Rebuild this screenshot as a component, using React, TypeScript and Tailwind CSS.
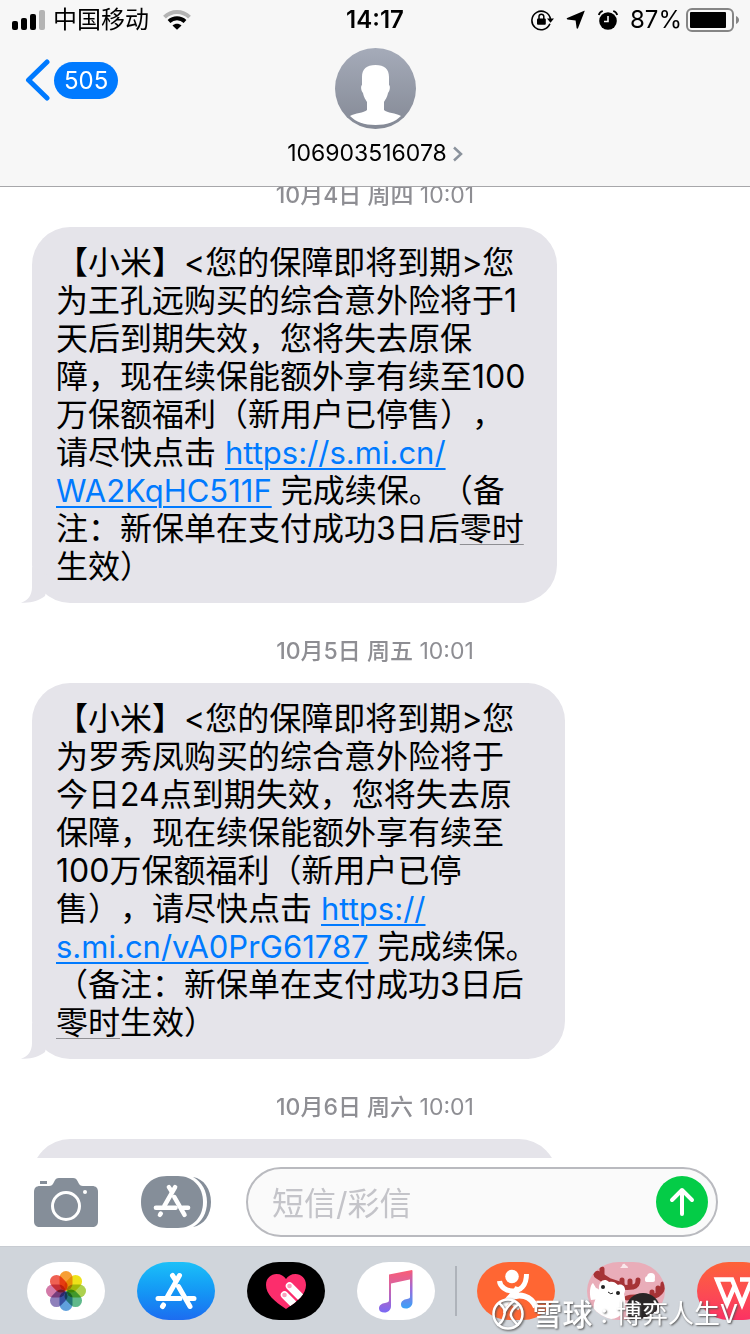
import React, { useState } from 'react';

type Message = {
  day: string;
  time: string;
  width: string;
  body?: React.ReactNode;
};

function BodyLink({ href, children }: { href: string; children: React.ReactNode }) {
  return (
    <a href={href} className="text-[31px] text-[#007aff] underline decoration-2 underline-offset-4">
      {children}
    </a>
  );
}

function DateHint({ children }: { children: React.ReactNode }) {
  return (
    <span className="underline decoration-[#8e8e93] decoration-1 underline-offset-4">{children}</span>
  );
}

const messages: Message[] = [
  {
    day: '10月4日 周四',
    time: '10:01',
    width: 'w-[70%]',
    body: (
      <>
        【小米】&lt;您的保障即将到期&gt;您<br />
        为王孔远购买的综合意外险将于1<br />
        天后到期失效，您将失去原保<br />
        障，现在续保能额外享有续至100<br />
        万保额福利（新用户已停售），<br />
        请尽快点击 <BodyLink href="https://s.mi.cn/WA2KqHC511F">https://s.mi.cn/<br />
        WA2KqHC511F</BodyLink> 完成续保。（备<br />
        注：新保单在支付成功3日后<DateHint>零时</DateHint><br />
        生效）
      </>
    ),
  },
  {
    day: '10月5日 周五',
    time: '10:01',
    width: 'w-[71%]',
    body: (
      <>
        【小米】&lt;您的保障即将到期&gt;您<br />
        为罗秀凤购买的综合意外险将于<br />
        今日24点到期失效，您将失去原<br />
        保障，现在续保能额外享有续至<br />
        100万保额福利（新用户已停<br />
        售），请尽快点击 <BodyLink href="https://s.mi.cn/vA0PrG61787">https://<br />
        s.mi.cn/vA0PrG61787</BodyLink> 完成续保。<br />
        （备注：新保单在支付成功3日后<br />
        <DateHint>零时</DateHint>生效）
      </>
    ),
  },
  {
    day: '10月6日 周六',
    time: '10:01',
    width: 'w-[70%]',
  },
];

function StatusBar() {
  return (
    <div className="grid h-10 grid-cols-[1fr_auto_1fr] items-center px-3 text-2xl leading-none">
      <div className="flex items-center">
        <svg width="33" height="20" viewBox="0 0 33 20" aria-hidden="true">
          <rect x="0" y="11" width="6" height="9" rx="2" />
          <rect x="9" y="8" width="6" height="12" rx="2" />
          <rect x="18" y="4" width="6" height="16" rx="2" />
          <rect x="27" y="0" width="6" height="20" rx="2" fill="#b4b4b4" />
        </svg>
        <span className="ml-2">中国移动</span>
        <svg className="ml-3.5" width="28" height="20" viewBox="0 0 28 20" fill="none" aria-hidden="true">
          <path d="M1.5 7.2C8.5 .3 19.5 .3 26.5 7.2" stroke="#b4b4b4" strokeWidth="4" />
          <path d="M6 11.5c4.600-4.300 11.400-4.300 16 0" stroke="#000" strokeWidth="4" />
          <path d="M9.500 15.400c2.600-2.300 6.400-2.300 9 0L14 19.800z" fill="#000" />
        </svg>
      </div>
      <span className="font-semibold">14:17</span>
      <div className="flex items-center justify-end">
        <svg width="23" height="22" viewBox="0 0 23 22" fill="none" aria-hidden="true">
          <path d="M18.900 14.800A9.300 9.300 0 1 1 19.400 10" stroke="#000" strokeWidth="1.6" />
          <path d="M16 9.500h7l-3.500 4.300z" fill="#000" />
          <path d="M8 10V7.600a2.400 2.400 0 0 1 4.800 0V10" stroke="#000" strokeWidth="1.5" />
          <rect x="6" y="9.5" width="8.8" height="6.3" rx="1" fill="#000" />
        </svg>
        <svg className="ml-3" width="20" height="20" viewBox="0 0 20 20" aria-hidden="true">
          <path d="M18.600 1.200 12 18.300c-.3.700-1.300.600-1.400-.200L9.600 10.600 1.400 9.400C.6 9.200.500 8.400 1.200 8.100L17.700 1c.6-.2 1.100-.4.900.2z" />
        </svg>
        <svg className="ml-3" width="20" height="20" viewBox="0 0 20 20" fill="none" aria-hidden="true">
          <circle cx="10" cy="11" r="8.8" fill="#000" />
          <path d="M10 6v5.500H6" stroke="#f7f7f7" strokeWidth="1.6" />
          <path d="M.8 5C1.300 3 2.800 1.500 4.800 1M19.200 5C18.700 3 17.200 1.500 15.200 1" stroke="#000" strokeWidth="1.8" />
        </svg>
        <span className="ml-3">87%</span>
        <svg className="-mr-0.5 ml-1" width="54" height="24" viewBox="0 0 54 24" aria-hidden="true">
          <rect x="1" y="1" width="46" height="22" rx="5" fill="none" stroke="#858585" strokeWidth="2" />
          <rect x="4" y="4" width="36" height="16" rx="1" />
          <path d="M50 8c4 1.500 4 6.500 0 8z" fill="#858585" />
        </svg>
      </div>
    </div>
  );
}

function Header() {
  return (
    <header className="border-b border-[#a7a7aa] bg-[#f7f7f7]">
      <StatusBar />
      <div className="grid grid-cols-3 items-start px-6 pt-2 pb-4">
        <a href="#inbox" aria-label="505" className="mt-[11px] flex items-center gap-1">
          <svg width="26" height="42" viewBox="0 0 26 42" fill="none" stroke="#007aff" strokeWidth="5" strokeLinecap="round" strokeLinejoin="round" aria-hidden="true">
            <path d="M23 3 4.500 21 23 39" />
          </svg>
          <span className="rounded-full bg-[#007aff] px-2.5 text-2xl leading-[37px] text-white">505</span>
        </a>
        <div className="flex flex-col items-center">
          <svg width="81" height="81" viewBox="0 0 81 81" aria-hidden="true">
            <defs>
              <linearGradient id="avatar" x1="0" y1="0" x2="0" y2="1">
                <stop offset="0" stopColor="#a5abb9" />
                <stop offset="1" stopColor="#848995" />
              </linearGradient>
            </defs>
            <circle cx="40.5" cy="40.5" r="40.5" fill="url(#avatar)" />
            <path
              d="M40.500 17c9 0 13.500 4 13.500 12v8c1.500.5 1 6-1 8-1 5-3 7-4 9v8c3 3 12 3 17 6-6 6-14 9-25.500 9S21 74 15 68c5-3 14-3 17-6v-8c-1-2-3-4-4-9-2-2-2.500-7.500-1-8v-8c0-8 4.500-12 13.500-12z"
              fill="#fff"
            />
          </svg>
          <button type="button" className="mt-2 flex items-center gap-1.5 text-[23px] leading-[33px]">
            106903516078
            <svg width="10" height="16" viewBox="0 0 10 16" fill="none" stroke="#8a929c" strokeWidth="2.5" aria-hidden="true">
              <path d="M1 1.500 8 8l-7 6.500" />
            </svg>
          </button>
        </div>
      </div>
    </header>
  );
}

function Bubble({ width, children }: { width: string; children?: React.ReactNode }) {
  return (
    <div className={`relative mt-6 ml-8 min-h-20 rounded-[38px] bg-[#e5e4ea] py-[17px] pl-6 text-[32px] leading-[38px] whitespace-nowrap ${width}`}>
      {children}
      <svg className="absolute bottom-0 -left-3" width="40" height="36" viewBox="0 0 40 36" aria-hidden="true">
        <path d="M12 0v20C12 28 8 34 1 35.500c8 1 18-1.500 24-6.500L30 10z" fill="#e5e4ea" />
      </svg>
    </div>
  );
}

function StoreGlyph({ className }: { className?: string }) {
  return (
    <svg className={className} viewBox="0 0 42 38" fill="none" stroke="#fff" strokeWidth="5" strokeLinecap="round" aria-hidden="true">
      <path d="M17.500 3.500 20.500 8" />
      <path d="M24.500 3.500 12.500 24.500" />
      <path d="M23.500 14.500 35 34.500" />
      <path d="M3 26.500H25M33 26.500h6" />
      <path d="M8.500 33 7.500 34.500" />
    </svg>
  );
}

const petals = ['#f7941e', '#ecdf00', '#a4cc3c', '#4fb27e', '#4f96d8', '#8272b4', '#cf6b9f', '#ee5040'];

function Composer() {
  const [text, setText] = useState('');

  return (
    <form className="flex h-22 shrink-0 items-center bg-white pr-8 pl-[34px]" onSubmit={(e) => e.preventDefault()}>
      <button type="button" aria-label="相机">
        <svg width="64" height="49" viewBox="0 0 64 49" fill="#858e99" aria-hidden="true">
          <rect x="6" y="3" width="7" height="3" />
          <path d="M6 8h9c2.500 0 3.500-1 4.500-3l1-2C21.500 1 22.500 0 25 0h14c2.500 0 3.500 1 4.500 3l1 2c1 2 2 3 4.500 3h9c4 0 6 2 6 6v29c0 4-2 6-6 6H6c-4 0-6-2-6-6V14c0-4 2-6 6-6z" />
          <circle cx="32" cy="28" r="13.5" fill="none" stroke="#fff" strokeWidth="3" />
          <circle cx="51" cy="14" r="2" fill="#fff" />
        </svg>
      </button>
      <button type="button" aria-label="App Store" className="relative ml-[43px]">
        <svg width="70" height="52" viewBox="0 0 70 52" fill="#858e99" aria-hidden="true">
          <path d="M26 0h11c15 0 25 11 25 26S52 52 37 52H26C10 52 0 41 0 26S10 0 26 0z" />
          <path d="M52 1c11 2 18 12 18 25s-7 23-18 25c9-5 14-14 14-25S61 6 52 1z" />
        </svg>
        <StoreGlyph className="absolute top-2 left-3 h-[34px] w-[38px]" />
      </button>
      <div className="ml-[35px] flex h-[70px] min-w-0 flex-1 items-center rounded-full border-2 border-[#b9babf] bg-[#fafafa] pr-2 pl-6">
        <input
          aria-label="短信/彩信"
          placeholder="短信/彩信"
          className="min-w-0 flex-1 bg-transparent pt-1 text-[32px] outline-none placeholder:text-[#c4c4c9]"
          value={text}
          onChange={(e) => setText(e.target.value)}
        />
        <button type="submit" aria-label="发送" className="flex size-[52px] items-center justify-center rounded-full bg-[#04cc47]">
          <svg width="26" height="30" viewBox="0 0 26 30" fill="none" stroke="#fff" strokeWidth="4" strokeLinecap="round" strokeLinejoin="round" aria-hidden="true">
            <path d="M13 27V3M3 13 13 3l10 10" />
          </svg>
        </button>
      </div>
    </form>
  );
}

const appShape = 'flex h-[58px] w-[78px] shrink-0 items-center justify-center overflow-hidden rounded-[32px/29px]';

function AppStrip() {
  return (
    <nav className="flex h-22 shrink-0 items-center overflow-hidden border-t border-[#c8ccd2] bg-[#d0d5db] pl-[27px]">
      <button type="button" aria-label="照片" className={`${appShape} bg-white`}>
        <svg width="42" height="42" viewBox="0 0 42 42" aria-hidden="true">
          {petals.map((color, i) => (
            <rect key={color} x="14.5" y="1" width="13" height="19.5" rx="6.5" fill={color} className="mix-blend-multiply" opacity="0.9" transform={`rotate(${i * 45} 21 21)`} />
          ))}
        </svg>
      </button>
      <button type="button" aria-label="App Store" className={`${appShape} ml-8 bg-linear-to-b from-[#1dc0f8] to-[#1d6cf0]`}>
        <StoreGlyph className="h-[38px] w-[42px]" />
      </button>
      <button type="button" aria-label="Digital Touch" className={`${appShape} ml-8 bg-black`}>
        <svg width="42" height="38" viewBox="0 0 42 38" aria-hidden="true">
          <defs>
            <clipPath id="heart">
              <path d="M21 37C9 29 1 22 1 13 1 6 6 2 11.500 2 16 2 19 4 21 7c2-3 5-5 9.500-5C36 2 41 6 41 13c0 9-8 16-20 24z" />
            </clipPath>
          </defs>
          <g clipPath="url(#heart)">
            <path d="M0 0h42v38H0z" fill="#fc2d6c" />
            <path d="m24.500 14 17 17M19.500 23l17 17" stroke="#fff" strokeWidth="7.5" strokeLinecap="round" />
            <circle cx="24.5" cy="14" r="2.3" fill="#fba0bd" />
            <circle cx="19.5" cy="23" r="2.3" fill="#fba0bd" />
          </g>
        </svg>
      </button>
      <button type="button" aria-label="音乐" className={`${appShape} ml-8 bg-white`}>
        <svg width="36" height="44" viewBox="0 0 36 44" aria-hidden="true">
          <defs>
            <linearGradient id="note" x1="0" y1="0" x2="0" y2="1">
              <stop offset="0" stopColor="#fb5c74" />
              <stop offset=".35" stopColor="#d963a0" />
              <stop offset="1" stopColor="#7a69f5" />
            </linearGradient>
            <linearGradient id="noteRight" x1="0" y1="0" x2="0" y2="1">
              <stop offset="0" stopColor="#f4597c" />
              <stop offset=".5" stopColor="#9a6cdc" />
              <stop offset="1" stopColor="#38a3f8" />
            </linearGradient>
          </defs>
          <path d="M11 5.500 34 1v9L13 14.500V37c0 4-3 6.500-6.500 6.500S1 42 1 39.500C1 36 4 34.500 7 34c3-.5 4-1 4-3z" fill="url(#note)" />
          <path d="M32 5l2.500-4v32c0 4-3 6.500-6.500 6.500S23 38 23 35.500c0-3.500 3-5 6-5.500s3-1 3-3z" fill="url(#noteRight)" />
        </svg>
      </button>
      <div className="ml-5 h-[50px] w-0.5 shrink-0 bg-[#aeb3ba]" />
      <button type="button" aria-label="健康运动" className={`${appShape} ml-5 bg-[#ff6633]`}>
        <svg width="78" height="58" viewBox="0 0 78 58" fill="none" stroke="#fff" strokeWidth="6" aria-hidden="true">
          <circle cx="35" cy="14.5" r="6.8" fill="#fff" stroke="none" />
          <path d="M22.500 19c1 12 27 17 27-7" strokeWidth="5" />
          <path d="M41 25c-2 8-11 10-15 21M32 37c10-7 22-3 27 8M31 36l12 10" />
        </svg>
      </button>
      <button type="button" aria-label="小鹿贴纸" className={`${appShape} ml-8 bg-[#e9adb9]`}>
        <svg width="78" height="58" viewBox="0 0 78 58" aria-hidden="true">
          <g fill="none" stroke="#a63336" strokeWidth="5" strokeLinecap="round" strokeLinejoin="round">
            <path d="M9 12 22 20c8 5 17 6 24 5 4-1 5-3 5-7M15 13V7M35 22v-4M43 24v-5" />
            <path d="M40 36c9-3 19 2 28-2 5-2 8-6 8-12M65 34v-4M71 31v-5" />
            <path d="M11 13 22 20l12 4" strokeWidth="8" />
          </g>
          <path d="M4 38c-2-7-1-15 2-17l3 5c4 1 6 5 4 11z" fill="#fff" />
          <path d="M12 28c-1-8 5-13 10-8 4-1 6 0 9 3 5-2 9 3 6 9 3 10 1 24-13 25C10 61 5 52 7 41z" fill="#fff" />
          <ellipse cx="56" cy="47" rx="17" ry="16" fill="#292526" />
          <g fill="#222"><circle cx="16" cy="25" r="2" /><circle cx="31" cy="31" r="2" /></g>
          <path d="M21 30q3 3 5 1" fill="none" stroke="#222" />
          <g fill="#fff"><circle cx="61" cy="17" r="3" /><circle cx="64" cy="15" r="4" /><rect x="58" y="16" width="10" height="4" rx="2" /></g>
          <path d="M33 6h8c0-3-3-2-3-4-2-1-3 1-3 2z" fill="#fff" opacity=".7" />
        </svg>
      </button>
      <button type="button" aria-label="WPS" className={`${appShape} ml-8 bg-linear-to-b from-[#fd6237] to-[#fb3163]`}>
        <svg width="78" height="58" viewBox="0 0 78 58" fill="none" stroke="#fff" strokeWidth="4.5" aria-hidden="true">
          <path d="M38 23 30 42 20 17.500h15L45 42l10-24.500h-12" />
        </svg>
      </button>
    </nav>
  );
}

function Watermark() {
  return (
    <div className="pointer-events-none absolute right-3 bottom-0 flex items-center leading-10 text-white [text-shadow:1px_1px_2px_#555]">
      <svg className="mr-2 drop-shadow-[1px_1px_1px_#555]" width="34" height="34" viewBox="0 0 34 34" fill="none" stroke="#fff" strokeWidth="2.5" aria-hidden="true">
        <circle cx="17" cy="17" r="14.5" />
        <path d="M8 6c4 3 7 8 5 13-1 4-4 8-7 9M28 7c-5 3-9 8-8 12s5 6 7 10" />
        <path d="M23 4c-3 2-7 6-10 12" />
      </svg>
      <span className="text-[30px] font-medium">雪球</span>
      <span className="mx-2 text-[26px]">:</span>
      <span className="text-[26px]">博弈人生V</span>
    </div>
  );
}

export default function App() {
  return (
    <div className="relative flex h-screen flex-col overflow-hidden bg-white font-[Inter,'Noto_Sans_CJK_SC',sans-serif] text-black [text-spacing-trim:space-all]">
      <Header />
      <main className="min-h-0 flex-1 overflow-hidden">
        {messages.map((message) => (
          <section key={message.day} className="mb-10">
            <p className="text-center text-[23px] leading-4 text-[#8e8e93]">
              <span className="font-medium">{message.day}</span> {message.time}
            </p>
            <Bubble width={message.width}>{message.body}</Bubble>
          </section>
        ))}
      </main>
      <Composer />
      <AppStrip />
      <Watermark />
    </div>
  );
}
